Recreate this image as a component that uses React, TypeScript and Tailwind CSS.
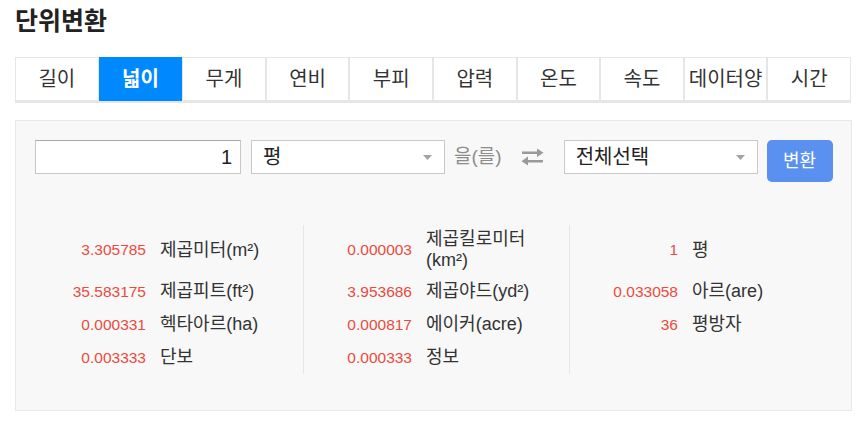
import React, { useState } from 'react';

const tabs = ['길이', '넓이', '무게', '연비', '부피', '압력', '온도', '속도', '데이터양', '시간'];

interface Result {
  value: string;
  name: React.ReactNode;
}

const columns: Result[][] = [
  [
    { value: '3.305785', name: '제곱미터(m²)' },
    { value: '35.583175', name: '제곱피트(ft²)' },
    { value: '0.000331', name: '헥타아르(ha)' },
    { value: '0.003333', name: '단보' },
  ],
  [
    { value: '0.000003', name: <>제곱킬로미터<br />(km²)</> },
    { value: '3.953686', name: '제곱야드(yd²)' },
    { value: '0.000817', name: '에이커(acre)' },
    { value: '0.000333', name: '정보' },
  ],
  [
    { value: '1', name: '평' },
    { value: '0.033058', name: '아르(are)' },
    { value: '36', name: '평방자' },
  ],
];

const SelectBox = ({ label }: { label: string }) => (
  <div className="shrink-0 flex items-center justify-between w-[194px] h-[34px] bg-white border border-[#c9c9c9] pl-[11px] pr-[12px]">
    <span className="text-[20px] leading-none text-[#222]">{label}</span>
    <svg width="9" height="5" viewBox="0 0 9 5">
      <polygon points="0,0 9,0 4.5,5" fill="#a3a3a3" />
    </svg>
  </div>
);

const SwapIcon = () => (
  <svg width="23" height="18" viewBox="0 0 23 18" fill="#9a9a9a">
    <rect x="1" y="3.5" width="17" height="2.5" />
    <polygon points="16,0.5 22.5,4.75 16,9" />
    <rect x="5" y="12" width="17" height="2.5" />
    <polygon points="7,8.5 0.5,13.25 7,17.5" />
  </svg>
);

const App = () => {
  const [active, setActive] = useState(1);

  return (
    <div className="w-[861px] h-[421px] bg-white font-['Liberation_Sans','Noto_Sans_CJK_KR',sans-serif] text-[#333]">
      {/* Title */}
      <h1 className="pt-[7px] pl-[15px] h-[36px] text-[25px] leading-[29px] font-bold text-[#222]">
        단위변환
      </h1>

      {/* Tabs */}
      <div className="mt-[21px] ml-[15px] w-[836px] grid grid-cols-10 border-b-2 border-[#e6e6e6]">
        {tabs.map((tab, i) => (
          <button
            key={tab}
            onClick={() => setActive(i)}
            className={`h-[44px] text-[20px] leading-none whitespace-nowrap ${
              i === active
                ? 'bg-[#0089ff] text-white font-bold border border-[#0089ff]'
                : 'bg-white text-[#333] border border-[#e6e6e6]'
            }`}
          >
            {tab}
          </button>
        ))}
      </div>

      {/* Converter panel */}
      <div className="mt-[17px] ml-[15px] w-[837px] h-[291px] bg-[#f8f8f8] border border-[#e8e8e8] pt-[19px] pl-[19px] pr-[19px]">
        <div className="flex items-start">
          <div className="shrink-0 flex items-center justify-end w-[206px] h-[34px] bg-white border border-[#c6c6c6] border-t-[#a9a9a9] pr-[8px]">
            <span className="text-[20px] leading-none text-[#222]">1</span>
          </div>
          <div className="ml-[10px]">
            <SelectBox label="평" />
          </div>
          <span className="shrink-0 ml-[9px] h-[34px] flex items-center whitespace-nowrap text-[19px] text-[#8c8c8c]">
            을(를)
          </span>
          <span className="shrink-0 ml-[19px] h-[34px] flex items-center">
            <SwapIcon />
          </span>
          <div className="ml-[20px]">
            <SelectBox label="전체선택" />
          </div>
          <button className="shrink-0 ml-[9px] w-[66px] h-[42px] rounded-[5px] bg-[#5a90f0] text-white text-[18px]">
            변환
          </button>
        </div>

        {/* Results */}
        <div className="mt-[43px] flex">
          {columns.map((col, ci) => (
            <div
              key={ci}
              className={`flex flex-col ${
                ci === 0 ? 'w-[268px]' : ci === 1 ? 'w-[266px] border-l border-[#e6e6e6]' : 'flex-1 border-l border-[#e6e6e6]'
              }`}
            >
              {[0, 1, 2, 3].map(ri => {
                const item = col[ri];
                return (
                  <div key={ri} className={`flex items-center ${ri === 0 ? 'h-[50px]' : 'h-[33px]'}`}>
                    {item && (
                      <>
                        <span className={`shrink-0 ${ci === 0 ? 'w-[111px]' : 'w-[108px]'} text-right text-[15.5px] text-[#ea4b3f]`}>
                          {item.value}
                        </span>
                        <span className="pl-[14px] text-[18px] leading-[21px] text-[#333]">{item.name}</span>
                      </>
                    )}
                  </div>
                );
              })}
            </div>
          ))}
        </div>
      </div>
    </div>
  );
};

export default App;
